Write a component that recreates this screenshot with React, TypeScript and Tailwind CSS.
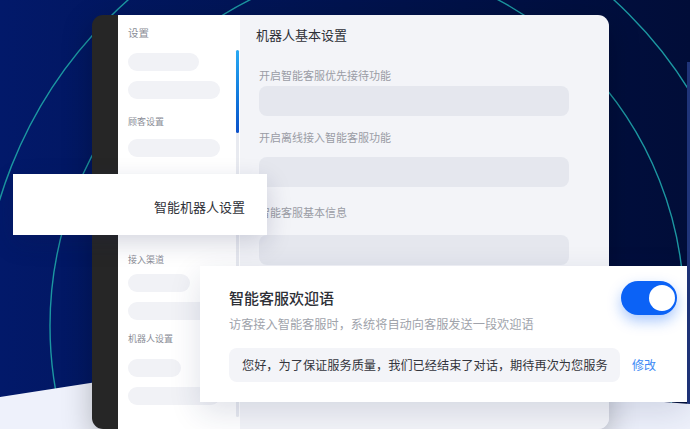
export default function App() {
  return (
    <div className="relative h-[429px] w-[690px] overflow-hidden bg-linear-to-r from-[#02196a] via-[#01134f] to-[#010d38] font-['Noto_Sans_CJK_SC','Noto_Sans',sans-serif]">
      {/* decorative rings + floor */}
      <svg className="absolute inset-0" width="690" height="429" viewBox="0 0 690 429">
        <defs>
          <clipPath id="leftHalf">
            <rect x="0" y="0" width="400" height="429" />
          </clipPath>
          <clipPath id="rightHalf">
            <rect x="400" y="0" width="290" height="429" />
          </clipPath>
        </defs>
        <g clipPath="url(#leftHalf)" fill="none" stroke="#1c97a1" strokeWidth="1.4">
          <circle cx="416" cy="326" r="366" />
          <circle cx="416" cy="326" r="435" />
        </g>
        <g clipPath="url(#rightHalf)" fill="none" stroke="#1c97a1" strokeWidth="1.4">
          <circle cx="334" cy="309" r="350" />
          <circle cx="334" cy="309" r="417" />
        </g>
        <rect x="687" y="62" width="3" height="342" fill="#1f3479" />
        <path d="M0 397 L200 366 L690 404 L690 429 L0 429 Z" fill="#eef1fb" />
      </svg>

      {/* device window */}
      <div className="absolute left-[92px] top-[15px] flex h-[414px] w-[517px] overflow-hidden rounded-[11px] shadow-[0_10px_30px_rgba(0,0,0,0.25)]">
        <div className="w-[26px] bg-[#262626]" />

        <div className="flex w-[122px] bg-white">
          <div className="w-[118px] pl-[10px] pt-[10px]">
            <p className="text-[10.5px] leading-[16px] text-[#8a8d96]">设置</p>
            <div className="mt-[12px] h-[18px] w-[71px] rounded-full bg-[#f1f2f6]" />
            <div className="mt-[10px] h-[18px] w-[92px] rounded-full bg-[#f1f2f6]" />
            <p className="mt-[16px] text-[9px] leading-[14px] text-[#8a8d96]">顾客设置</p>
            <div className="mt-[10px] h-[18px] w-[92px] rounded-full bg-[#f1f2f6]" />
            <p className="mt-[96px] text-[9px] leading-[14px] text-[#8a8d96]">接入渠道</p>
            <div className="mt-[7px] h-[18px] w-[62px] rounded-full bg-[#f1f2f6]" />
            <div className="mt-[10px] h-[18px] w-[92px] rounded-full bg-[#f1f2f6]" />
            <p className="mt-[12px] text-[9px] leading-[14px] text-[#8a8d96]">机器人设置</p>
            <div className="mt-[13px] h-[18px] w-[53px] rounded-full bg-[#f1f2f6]" />
            <div className="mt-[10px] h-[18px] w-[92px] rounded-full bg-[#f1f2f6]" />
          </div>
          <div className="mt-[35px] h-[367px] w-[3px] rounded-full bg-[#e8eaf0]">
            <div className="h-[83px] w-[3px] rounded-full bg-linear-to-b from-[#2aaaf4] to-[#0d50c9]" />
          </div>
        </div>

        <div className="flex-1 bg-[#f3f4f8] pt-[11px]">
          <h2 className="pl-[16px] text-[13px] leading-[18px] text-[#2d2f36]">机器人基本设置</h2>
          <div className="pl-[19px]">
            <p className="mt-[23px] text-[11px] leading-[16px] text-[#9a9ca5]">开启智能客服优先接待功能</p>
            <div className="mt-[3px] h-[30px] w-[310px] rounded-[8px] bg-[#e5e7ee]" />
            <p className="mt-[13px] text-[11px] leading-[16px] text-[#9a9ca5]">开启离线接入智能客服功能</p>
            <div className="mt-[12px] h-[30px] w-[310px] rounded-[8px] bg-[#e5e7ee]" />
            <p className="mt-[17px] text-[11px] leading-[16px] text-[#9a9ca5]">智能客服基本信息</p>
            <div className="mt-[15px] h-[30px] w-[310px] rounded-[8px] bg-[#e5e7ee]" />
          </div>
        </div>
      </div>

      {/* floating menu item */}
      <div className="absolute left-[13px] top-[174px] flex h-[61px] w-[254px] items-center justify-end bg-white pr-[22px] pt-[5px] shadow-[0_8px_24px_rgba(20,30,80,0.18)]">
        <span className="text-[13px] leading-[18px] text-[#2f3138]">智能机器人设置</span>
      </div>

      {/* welcome message card */}
      <div className="absolute left-[200px] top-[266px] h-[136px] w-[487px] bg-white pl-[29px] pt-[22px] shadow-[0_10px_30px_rgba(30,40,90,0.14)]">
        <h3 className="text-[15px] font-medium leading-[20px] text-[#2d2f36]">智能客服欢迎语</h3>
        <p className="mt-[8px] text-[12.2px] leading-[16px] text-[#a0a3ab]">访客接入智能客服时，系统将自动向客服发送一段欢迎语</p>
        <div className="mt-[16px] flex items-center">
          <div className="flex h-[34px] w-[391px] items-center rounded-[8px] bg-[#f3f4f8] pl-[13px]">
            <span className="text-[12.2px] leading-[16px] text-[#33353c]">您好，为了保证服务质量，我们已经结束了对话，期待再次为您服务</span>
          </div>
          <span className="ml-[12px] text-[12px] leading-[16px] text-[#3e8af5]">修改</span>
        </div>

        <div className="absolute left-[421px] top-[15px] flex h-[34px] w-[56px] items-center justify-end rounded-full bg-[#0b62f6] pr-[2px] shadow-[0_6px_14px_rgba(11,98,246,0.35)]">
          <div className="h-[26px] w-[26px] rounded-full bg-white" />
        </div>
      </div>
    </div>
  )
}
